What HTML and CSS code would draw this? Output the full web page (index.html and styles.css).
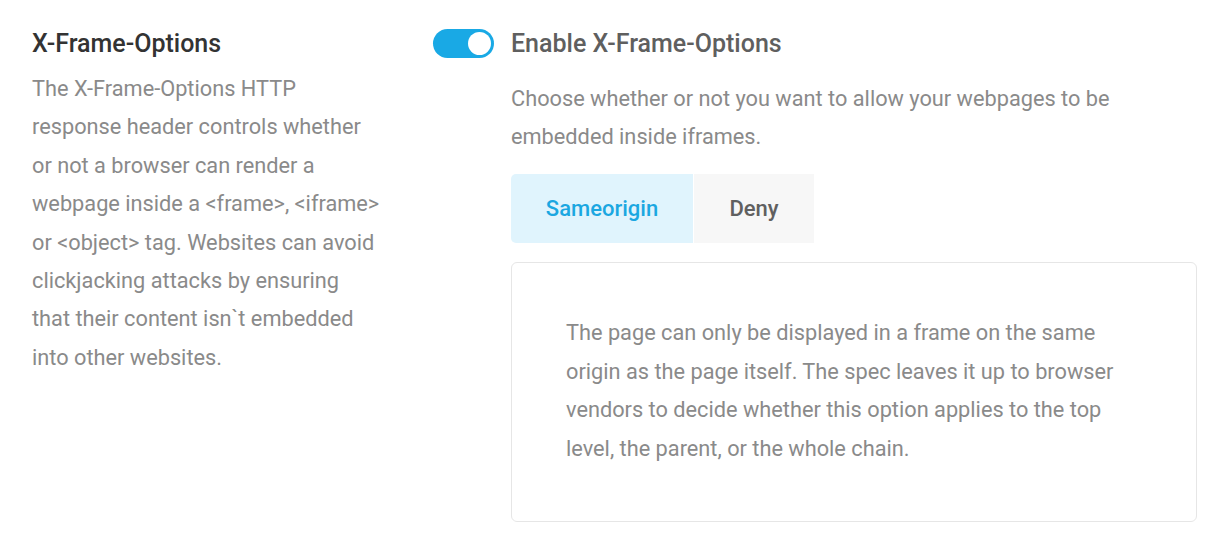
FILE: index.html
```html
<!DOCTYPE html>
<html>
<head>
<meta charset="utf-8">
<link rel="stylesheet" href="styles.css">
</head>
<body>
<div class="page">
  <section class="intro">
    <h2 class="intro-title">X-Frame-Options</h2>
    <p class="intro-text">The X-Frame-Options HTTP response header controls whether or not a browser can render a webpage inside a &lt;frame&gt;, &lt;iframe&gt; or &lt;object&gt; tag. Websites can avoid clickjacking attacks by ensuring that their content isn`t embedded into other websites.</p>
  </section>
  <section class="settings">
    <div class="toggle-row">
      <span class="toggle"><span class="knob"></span></span>
      <h3 class="toggle-label">Enable X-Frame-Options</h3>
    </div>
    <div class="settings-body">
      <p class="settings-text">Choose whether or not you want to allow your webpages to be embedded inside iframes.</p>
      <div class="segmented">
        <button class="seg seg-active">Sameorigin</button>
        <button class="seg">Deny</button>
      </div>
      <div class="info-box">
        <p>The page can only be displayed in a frame on the same origin as the page itself. The spec leaves it up to browser vendors to decide whether this option applies to the top level, the parent, or the whole chain.</p>
      </div>
    </div>
  </section>
</div>
</body>
</html>
```

FILE: styles.css
```css
html, body {
  margin: 0;
  padding: 0;
  background: #ffffff;
}
body {
  font-family: Roboto, "Liberation Sans", sans-serif;
}
.page {
  display: flex;
  padding: 28px 23px 0 32px;
}
.intro {
  width: 348px;
  flex: none;
}
.intro-title {
  margin: 0;
  font-size: 25px;
  line-height: 32px;
  font-weight: 500;
  color: #333333;
}
.intro-text {
  margin: 10px 0 0;
  font-size: 21.75px;
  line-height: 38.4px;
  color: #8a8a8a;
}
.settings {
  margin-left: 53px;
  flex: 1;
}
.toggle-row {
  display: flex;
  align-items: center;
  gap: 17px;
}
.toggle {
  width: 61px;
  height: 29px;
  border-radius: 15px;
  background: #19a9e5;
  display: flex;
  align-items: center;
  justify-content: flex-end;
  padding: 0 3px;
  box-sizing: border-box;
  margin-top: -2px;
}
.knob {
  width: 23px;
  height: 23px;
  border-radius: 50%;
  background: #ffffff;
}
.toggle-label {
  margin: 0;
  font-size: 25px;
  line-height: 32px;
  font-weight: 500;
  color: #5f5f5f;
}
.settings-body {
  margin-left: 78px;
}
.settings-text {
  margin: 20px 0 0;
  font-size: 21.75px;
  line-height: 37.5px;
  color: #8a8a8a;
}
.segmented {
  display: flex;
  gap: 1px;
  margin-top: 19px;
}
.seg {
  border: none;
  height: 69px;
  font-family: inherit;
  font-size: 22px;
  font-weight: 500;
  background: #f7f7f7;
  color: #606060;
  padding: 0;
  width: 120px;
}
.seg-active {
  width: 182px;
  background: #e0f4fd;
  color: #1ba7e1;
  border-radius: 5px 0 0 5px;
}
.info-box {
  margin-top: 19px;
  height: 260px;
  box-sizing: border-box;
  border: 1px solid #e6e6e6;
  border-radius: 6px;
  padding: 51px 54px;
}
.info-box p {
  margin: 0;
  font-size: 21.75px;
  line-height: 38.6px;
  color: #8a8a8a;
}
```
